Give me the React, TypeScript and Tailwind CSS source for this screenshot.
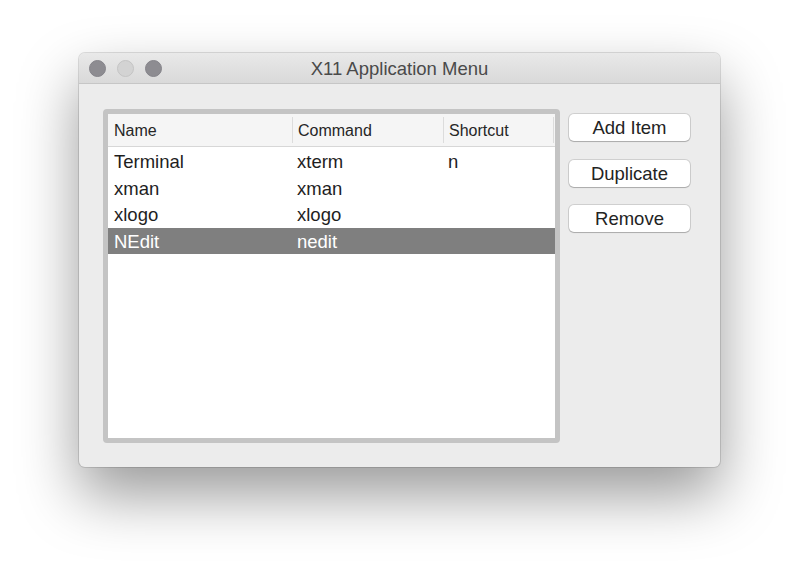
import React from "react";

const rows = [
  { name: "Terminal", cmd: "xterm", key: "n", sel: false },
  { name: "xman", cmd: "xman", key: "", sel: false },
  { name: "xlogo", cmd: "xlogo", key: "", sel: false },
  { name: "NEdit", cmd: "nedit", key: "", sel: true },
];

export default function App() {
  return (
    <div
      className="w-[799px] h-[572px] bg-white pt-[53px] pl-[79px] overflow-hidden"
      style={{ fontFamily: '"Liberation Sans", Arial, sans-serif' }}
    >
      <div className="w-[641px] h-[414px] rounded-[6px] bg-[#ececec] flex flex-col overflow-hidden shadow-[0_0_0_1px_rgba(0,0,0,0.12),0_28px_60px_rgba(0,0,0,0.4)]">
        {/* Title bar */}
        <div className="h-[31px] shrink-0 grid grid-cols-[1fr_auto_1fr] items-center bg-gradient-to-b from-[#e9e9e9] to-[#d9d9d9] border-b border-[#c6c6c6]">
          <div className="flex items-center gap-[11px] pl-[10px] pt-[1px]">
            <span className="w-[17px] h-[17px] rounded-full bg-[#8d8c91] border border-[#85848a]" />
            <span className="w-[17px] h-[17px] rounded-full bg-[#d3d3d3] border border-[#c4c4c4]" />
            <span className="w-[17px] h-[17px] rounded-full bg-[#8d8c91] border border-[#85848a]" />
          </div>
          <div className="text-[18.5px] text-[#4a4a4a] leading-none pt-[3px]">X11 Application Menu</div>
          <div />
        </div>
        {/* Body */}
        <div className="flex pt-[25px] pl-[24px] gap-[9px]">
          <div className="w-[457px] h-[334px] bg-[#c4c4c4] rounded-[4px] p-[5px]">
            <div className="w-full h-full bg-white flex flex-col">
              <div className="h-[33px] shrink-0 bg-[#f5f5f5] border-b border-[#d7d7d7] flex items-center text-[16px] text-[#262626]">
                <div className="w-[184px] px-[6px] pt-[1px]">Name</div>
                <div className="w-[151px] h-[26px] flex items-center border-l border-[#dcdcdc] px-[5px] pt-[1px]">Command</div>
                <div className="w-[111px] h-[26px] flex items-center border-l border-r border-[#dcdcdc] px-[5px] pt-[1px]">Shortcut</div>
              </div>
              <div className="h-[1px] shrink-0" />
              {rows.map((r) => (
                <div
                  key={r.name}
                  className={`h-[26.5px] flex items-center text-[18.5px] pt-[2px] ${r.sel ? "bg-[#7f7f7f] text-white" : "text-[#1e1e1e]"}`}
                >
                  <div className="w-[184px] px-[6px]">{r.name}</div>
                  <div className="w-[151px] px-[5px]">{r.cmd}</div>
                  <div className="px-[5px]">{r.key}</div>
                </div>
              ))}
            </div>
          </div>
          <div className="w-[121px] mt-[5px] flex flex-col gap-[18.5px]">
            {["Add Item", "Duplicate", "Remove"].map((b) => (
              <div
                key={b}
                className="h-[27px] bg-white rounded-[5px] flex items-center justify-center text-[18.5px] text-[#232323] pt-[1px] shadow-[0_0_0_1px_rgba(0,0,0,0.12),0_1px_1px_rgba(0,0,0,0.18)]"
              >
                {b}
              </div>
            ))}
          </div>
        </div>
      </div>
    </div>
  );
}
